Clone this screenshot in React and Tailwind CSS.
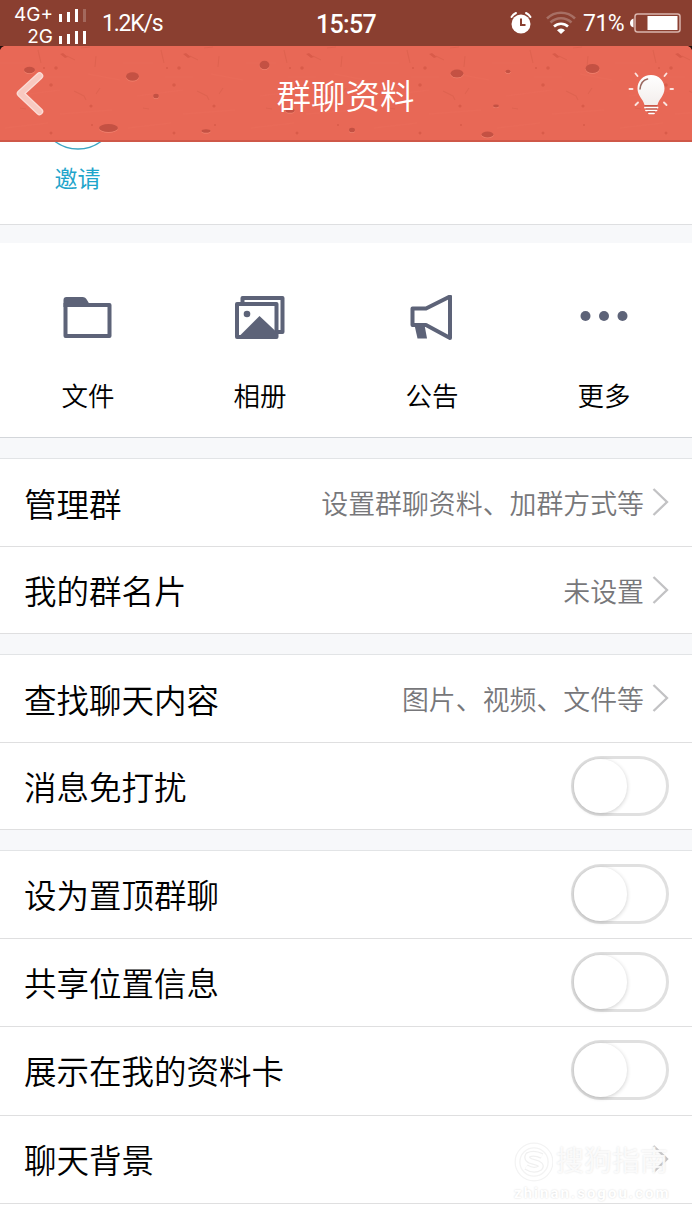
import React, { useState } from 'react';

const ICON_COLOR = '#5d6378';

const FolderIcon = () => (
  <svg width="52" height="46" viewBox="0 0 52 46" fill="none">
    <path d="M3.500 8V41H47.500V10H26" stroke={ICON_COLOR} strokeWidth="4" strokeLinejoin="round" />
    <path d="M1.500 12V5Q1.500 2 4.500 2H20.500Q23.500 2 25 5L28 10V12Z" fill={ICON_COLOR} />
  </svg>
);

const AlbumIcon = () => (
  <svg width="52" height="46" viewBox="0 0 52 46" fill="none">
    <path d="M8.500 8V3H48.500V37H43" stroke={ICON_COLOR} strokeWidth="4" strokeLinejoin="round" />
    <rect x="3" y="9" width="39.500" height="33" stroke={ICON_COLOR} strokeWidth="4" strokeLinejoin="round" />
    <circle cx="13" cy="19" r="3.300" fill={ICON_COLOR} />
    <path d="M4.500 42L25.500 21L42.500 37V42Z" fill={ICON_COLOR} />
  </svg>
);

const HornIcon = () => (
  <svg width="52" height="46" viewBox="0 0 52 46" fill="none">
    <path d="M6.500 13.500H20L44 1.500V43L20 30H6.500Z" stroke={ICON_COLOR} strokeWidth="4" strokeLinejoin="round" />
    <path d="M8.500 30H18.500L21 43.500H11.500Z" fill={ICON_COLOR} />
  </svg>
);

const MoreIcon = () => (
  <svg width="52" height="46" viewBox="0 0 52 46" fill={ICON_COLOR}>
    <circle cx="7.500" cy="21" r="5" />
    <circle cx="26" cy="21" r="5" />
    <circle cx="44.500" cy="21" r="5" />
  </svg>
);

const Signal = ({ weak }) => (
  <svg width="28" height="13" viewBox="0 0 28 13" fill="#fff">
    <rect x="0" y="5" width="3" height="8" />
    <rect x="8" y="3" width="3" height="10" />
    <rect x="16" y="0" width="3" height="13" />
    <rect x="24" y="0" width="3" height="13" opacity={weak ? 0.22 : 1} />
  </svg>
);

const AlarmIcon = () => (
  <svg width="22" height="24" viewBox="0 0 22 24" fill="none" stroke="#fff">
    <circle cx="11" cy="13" r="9.500" fill="#fff" stroke="none" />
    <path d="M1.500 6A11 11 0 0 1 6 2M16 2A11 11 0 0 1 20.500 6" strokeWidth="2" strokeLinecap="round" />
    <path d="M11 7.500V14H15.500" stroke="#8a3f30" strokeWidth="2" />
  </svg>
);

const WifiIcon = () => (
  <svg width="30" height="24" viewBox="0 0 30 24" fill="none" stroke="#fff" strokeWidth="2.500">
    <path d="M1 7.500A20 20 0 0 1 29 7.500M4.500 11.500A15 15 0 0 1 25.500 11.500" opacity="0.25" />
    <path d="M8 15.500A10 10 0 0 1 22 15.500" />
    <path d="M11 19.300A5.500 5.500 0 0 1 19 19.300L15 23Z" fill="#fff" stroke="none" />
  </svg>
);

const BatteryIcon = () => (
  <svg width="51" height="20" viewBox="0 0 51 20" fill="none">
    <path d="M3.500 5.500Q0 6.500 0 10T3.500 14.500Z" fill="#fff" />
    <rect x="5" y="1" width="45" height="18" rx="2.500" stroke="#d9b5ad" strokeWidth="1.500" />
    <rect x="17.500" y="3" width="30" height="14" fill="#fff" />
  </svg>
);

const BulbIcon = () => (
  <svg width="48" height="44" viewBox="0 0 48 44" fill="none">
    <defs>
      <linearGradient id="bulb" x1="0" y1="0" x2="0" y2="1">
        <stop offset="0" stopColor="#fff" />
        <stop offset="1" stopColor="#f3eeec" />
      </linearGradient>
    </defs>
    <path d="M24 3C16 3 10.500 9 10.500 16.500C10.500 24 16 26.500 17.500 33H30.500C32 26.500 37.500 24 37.500 16.500C37.500 9 32 3 24 3Z" fill="url(#bulb)" />
    <path d="M13 17Q14 8.500 20.500 7" stroke="#9b6a61" strokeWidth="1.600" strokeLinecap="round" />
    <path d="M18 35.500H30.500M19 38.300H29.500M22 41.300H27" stroke="#fff" strokeWidth="1.800" strokeLinecap="round" />
    <path d="M17.500 34H30.500M18.500 37H30M20.500 39.900H28" stroke="#b0493a" strokeWidth="1" />
    <path d="M2.500 17H5.500M43.500 17H46M8.500 1.500L10.500 4M39.500 1.500L37.500 4M8.500 33L11 30.500M39.500 33L37 30.500" stroke="#fbe3de" strokeWidth="1.900" strokeLinecap="round" />
  </svg>
);

const ChevronIcon = () => (
  <svg className="shrink-0" width="17" height="30" viewBox="0 0 17 30" fill="none">
    <path d="M1.500 2L15 15L1.500 28" stroke="#c2c2c4" strokeWidth="2.300" />
  </svg>
);

// big craters of the sponge skin: cx, cy, rx, ry
const spots = [
  [29.5, 24, 5.5, 3.2],
  [132.500, 30.500, 6.5, 4.2],
  [156, 50, 2.8, 2.3],
  [108.500, 82, 9.5, 4],
  [206, 85, 4.5, 1.8],
  [264.500, 19, 5, 4.3],
  [290, 64.5, 4.500, 2.300],
  [352, 84, 3, 2.3],
  [457, 27.5, 6.5, 4],
  [508, 25.5, 2.500, 1.8],
  [496, 60, 3, 1.4],
  [487.500, 88.500, 6, 3],
  [592.500, 22.500, 7, 4.5],
];

const SpongeSkin = () => (
  <svg className="absolute inset-0" width="692" height="96" viewBox="0 0 692 96">
    <defs>
      <pattern id="specks" width="123" height="96" patternUnits="userSpaceOnUse">
        <g fill="#cf5140" opacity="0.6">
          <circle cx="56" cy="22" r="1.800" />
          <circle cx="44" cy="22" r="1" />
          <circle cx="51" cy="39" r="1.800" />
          <circle cx="91" cy="60" r="1.600" />
          <circle cx="51" cy="87" r="1.500" />
          <circle cx="92" cy="79" r="1" />
          <path d="M60 8L63 7L68 11L65 12Z" />
        </g>
        <path
          d="M38 4L41 17M67 10L75 14M81 2L90 1M96 10L95 21M74 45L84 50L86 54M20 62L26 63M100 42L96 48"
          fill="none"
          stroke="#d65a48"
          strokeWidth="1.200"
          opacity="0.45"
        />
        <path
          d="M0 17H30M42 31H70M14 50L60 44M60 68L112 64M5 82L48 77M88 28L120 34"
          fill="none"
          stroke="#ee735e"
          strokeWidth="1"
          opacity="0.2"
        />
      </pattern>
    </defs>
    <rect width="692" height="96" fill="url(#specks)" />
    {spots.map(([cx, cy, rx, ry], i) => (
      <g key={i}>
        <ellipse cx={cx} cy={cy + 0.7} rx={rx} ry={ry} fill="#f28470" />
        <ellipse cx={cx} cy={cy} rx={rx} ry={ry} fill="#c45143" />
      </g>
    ))}
    <rect y="94" width="692" height="2" fill="#cf5848" />
    <path d="M0 0H4Q1 1 0 4ZM692 0H688Q691 1 692 4Z" fill="#25100c" />
  </svg>
);

const Toggle = ({ on, onClick }) => (
  <button
    onClick={onClick}
    className={`flex h-[60px] w-[98px] shrink-0 items-center rounded-full border-[3px] border-[#e0e0e0] ${
      on ? 'justify-end bg-[#12b7f5]' : 'justify-start bg-white'
    }`}
  >
    <span className="h-[54px] w-[53px] rounded-full bg-white shadow-[0_1px_4px_rgba(0,0,0,0.2)]" />
  </button>
);

const Watermark = () => (
  <div className="pointer-events-none absolute top-[25px] left-[514px] w-[156px]">
    <div className="flex items-center gap-[3px]">
      <svg width="39" height="42" viewBox="0 0 39 42" fill="none">
        <circle cx="20" cy="21" r="16.500" stroke="#f3f3f3" strokeWidth="6" />
        <circle cx="20" cy="21" r="16.500" stroke="#fff" strokeWidth="3.500" />
        <path d="M28 15Q20 11 14 14Q11 19 20 21Q29 23 26 27Q20 31 12 26" stroke="#f0f0f0" strokeWidth="6" />
        <path d="M28 15Q20 11 14 14Q11 19 20 21Q29 23 26 27Q20 31 12 26" stroke="#fff" strokeWidth="3.500" />
      </svg>
      <span className="text-[28px] leading-[42px] font-normal whitespace-nowrap text-white/80 [text-shadow:0_0_2px_#dedede]">
        搜狗指南
      </span>
    </div>
    <div className="mt-[2px] text-[15px] leading-4 font-bold tracking-[2px] whitespace-nowrap text-white [text-shadow:0_0_2px_#d6d6d6]">
      zhinan.sogou.com
    </div>
  </div>
);

const actions = [
  { label: '文件', icon: FolderIcon },
  { label: '相册', icon: AlbumIcon },
  { label: '公告', icon: HornIcon },
  { label: '更多', icon: MoreIcon },
];

const sections = [
  [
    { label: '管理群', value: '设置群聊资料、加群方式等', height: 'h-[88px]' },
    { label: '我的群名片', value: '未设置', height: 'h-[87px]' },
  ],
  [
    { label: '查找聊天内容', value: '图片、视频、文件等', height: 'h-[88px]' },
    { label: '消息免打扰', toggle: true, height: 'h-[87px]' },
  ],
  [
    { label: '设为置顶群聊', toggle: true, height: 'h-[88px] pb-[2px]' },
    { label: '共享位置信息', toggle: true, height: 'h-[88px] pb-[2px]' },
    { label: '展示在我的资料卡', toggle: true, height: 'h-[89px] pb-[2px]' },
    { label: '聊天背景', watermark: true, height: 'h-[88px] pb-[2px]' },
  ],
];

const App = () => {
  const [enabled, setEnabled] = useState({});

  const flip = (label) => setEnabled((prev) => ({ ...prev, [label]: !prev[label] }));

  return (
    <div className="h-[1230px] w-[692px] overflow-hidden bg-white font-['Roboto','Noto_Sans_CJK_SC',sans-serif] text-black">
      {/* Status bar */}
      <div className="grid h-[46px] grid-cols-[1fr_auto_1fr] items-center bg-[#8a3f30] text-white">
        <div className="flex h-[46px] items-center">
          <div className="flex w-[87px] flex-col gap-[2px] pt-[6px] font-['Inter',sans-serif] text-[19px] leading-[20px]">
            <div className="flex items-center justify-end gap-[6px]">
              4G+ <Signal weak />
            </div>
            <div className="flex items-center justify-end gap-[6px]">
              2G <Signal />
            </div>
          </div>
          <span className="ml-[15px] pt-[2px] text-[23px] leading-6 tracking-[-1.2px]">1.2K/s</span>
        </div>
        <span className="pt-[3px] text-[25px] leading-7 font-medium tracking-[-0.700px]">15:57</span>
        <div className="flex items-center justify-end pr-[11px]">
          <AlarmIcon />
          <div className="ml-[14px]"><WifiIcon /></div>
          <span className="mr-[6px] ml-[7px] pt-[2px] text-[23px] leading-6 tracking-[-0.600px]">71%</span>
          <BatteryIcon />
        </div>
      </div>

      {/* Title bar */}
      <div className="relative h-24 bg-[#e86856]">
        <SpongeSkin />
        <div className="relative flex h-full items-center justify-between pr-[17px] pl-4">
          <svg width="48" height="44" viewBox="0 0 48 44" fill="none">
            <path d="M23.500 4L4.500 21.500L23.500 39.500" stroke="#fbdcd6" strokeWidth="7.500" strokeLinecap="round" strokeLinejoin="round" />
            <path d="M23.500 4L4.500 21.500L23.500 39.500" stroke="#f8c9c0" strokeWidth="5" strokeLinecap="round" strokeLinejoin="round" />
          </svg>
          <h1 className="pt-[8px] text-[34.500px] font-[350] text-white">群聊资料</h1>
          <BulbIcon />
        </div>
      </div>

      {/* Invite */}
      <div className="flex h-[83px] w-full border-b border-[#dedfe1]">
        <div className="flex w-[155px] flex-col items-center">
          <svg width="60" height="9" viewBox="0 0 60 9" fill="none">
            <circle cx="30" cy="-31.500" r="38.500" stroke="#3ba6c4" strokeWidth="1.400" />
          </svg>
          <span className="mt-[13px] text-[23px] leading-8 text-[#1fa5cb]">邀请</span>
        </div>
      </div>
      <div className="h-[18px] bg-[#f7f8fa]" />

      {/* Shortcuts */}
      <div className="grid h-[195px] grid-cols-4 border-b border-[#d3d6da] px-[2px]">
        {actions.map(({ label, icon: Icon }) => (
          <button key={label} className="flex flex-col items-center pt-[52px]">
            <Icon />
            <span className="mt-[38px] text-[26.500px] leading-9 font-[350]">{label}</span>
          </button>
        ))}
      </div>

      {/* Settings */}
      <div className="flex flex-col gap-5 bg-[#f7f8fa] pt-5">
        {sections.map((rows, i) => (
          <div key={i} className="border-t border-[#e2e4e6] bg-white">
            {rows.map((row) => (
              <div
                key={row.label}
                className={`relative flex items-center justify-between border-b border-[#dfdfe0] pl-6 pr-[23px] ${row.height}`}
              >
                <span className="pt-[7px] text-[32.500px] font-[350]">{row.label}</span>
                {row.toggle ? (
                  <Toggle on={enabled[row.label]} onClick={() => flip(row.label)} />
                ) : (
                  <div className="flex items-center gap-2 text-[#77777a]">
                    <span className="pt-[6px] text-[26.900px] font-[350]">{row.value}</span>
                    <ChevronIcon />
                  </div>
                )}
                {row.watermark && <Watermark />}
              </div>
            ))}
          </div>
        ))}
      </div>
    </div>
  );
};

export default App;
